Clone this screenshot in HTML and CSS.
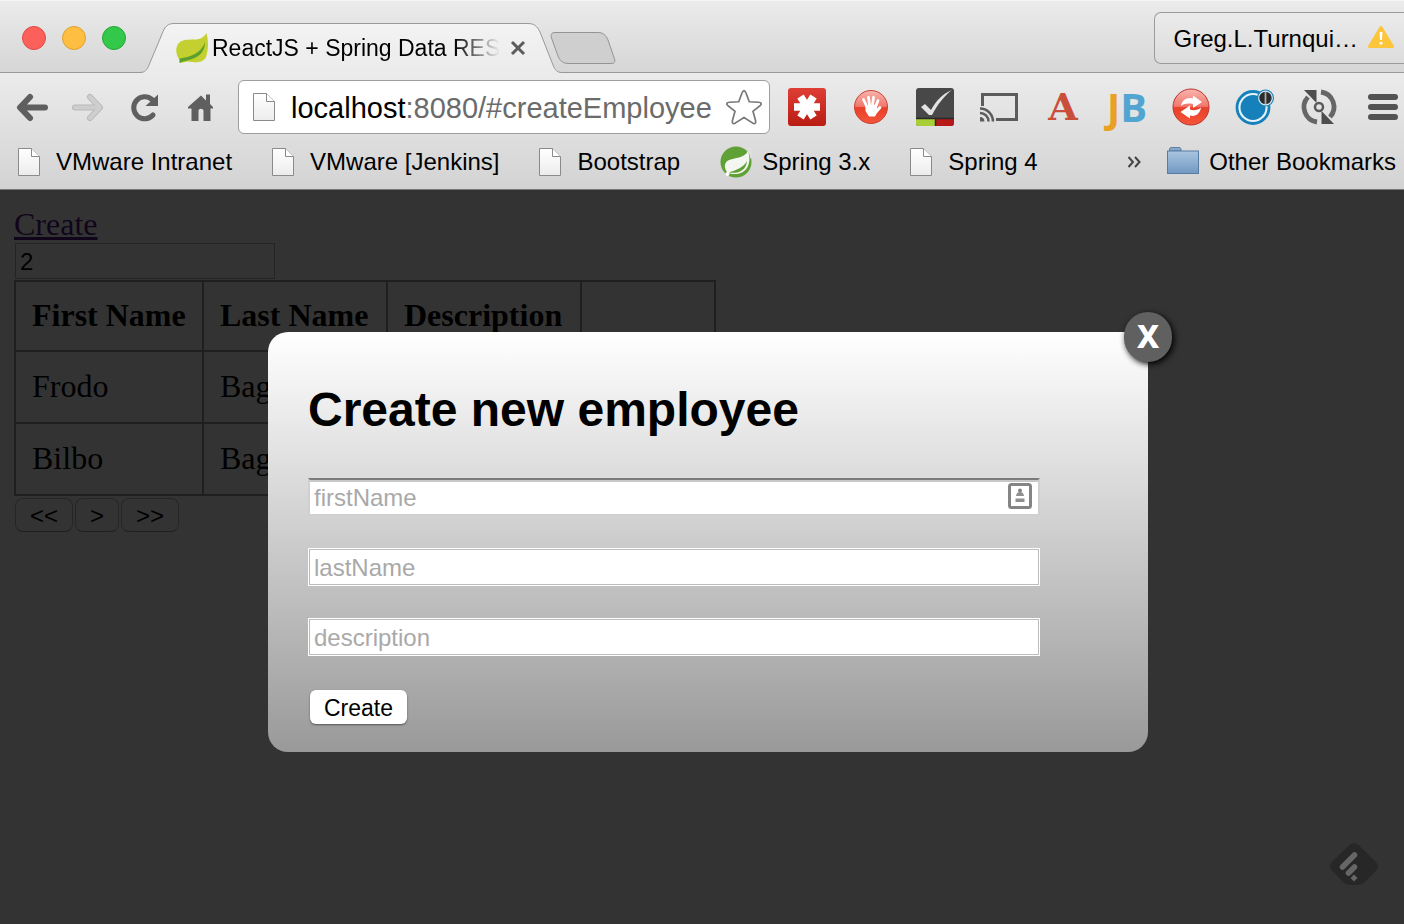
FILE: index.html
```html
<!DOCTYPE html>
<html lang="en">
<head>
<meta charset="utf-8">
<title>ReactJS + Spring Data REST</title>
<link rel="stylesheet" href="styles.css">
</head>
<body>
<svg class="defs" aria-hidden="true">
  <defs>
    <linearGradient id="paper" x1="0" y1="0" x2="0" y2="1"><stop offset="0" stop-color="#fff"/><stop offset="1" stop-color="#ececec"/></linearGradient>
    <linearGradient id="tabfill" x1="0" y1="0" x2="0" y2="1"><stop offset="0" stop-color="#f3f3f3"/><stop offset="1" stop-color="#ebebeb"/></linearGradient>
    <linearGradient id="redbox" x1="0" y1="0" x2="0" y2="1"><stop offset="0" stop-color="#df3e35"/><stop offset="1" stop-color="#b81c12"/></linearGradient>
    <linearGradient id="redball" x1="0" y1="0" x2="0" y2="1"><stop offset="0" stop-color="#f9b5ae"/><stop offset=".48" stop-color="#f0786c"/><stop offset=".52" stop-color="#e8402a"/><stop offset="1" stop-color="#f4553a"/></linearGradient>
    <linearGradient id="folder" x1="0" y1="0" x2="0" y2="1"><stop offset="0" stop-color="#a9c5e0"/><stop offset="1" stop-color="#7199c3"/></linearGradient>
    <symbol id="file" viewBox="0 0 22 28"><path d="M.5.5h13l8 8v19H.5z" fill="url(#paper)" stroke="#8a8a8a"/><path d="M13.500.5v8h8" fill="#fff" stroke="#8a8a8a"/></symbol>
  </defs>
</svg>

<header class="browser">
  <div class="tabstrip">
    <div class="lights">
      <button class="light red" aria-label="Close window"></button>
      <button class="light yellow" aria-label="Minimize window"></button>
      <button class="light green" aria-label="Zoom window"></button>
    </div>
    <div class="tab">
      <svg class="tab-shape" viewBox="0 0 422 52" aria-hidden="true"><path d="M0 50.500C5 50.500 7 48 9 43L22 12C25 4 28 1.500 34 1.500H388C394 1.500 397 4 400 10L413 43C415 48 417 50.500 422 50.500V52H0z" fill="url(#tabfill)"/><path d="M0 50.500C5 50.500 7 48 9 43L22 12C25 4 28 1.500 34 1.500H388C394 1.500 397 4 400 10L413 43C415 48 417 50.500 422 50.500" fill="none" stroke="#999"/></svg>
      <svg class="leaf" viewBox="0 0 32 32" aria-hidden="true"><path d="M30.500 1C33 11 32 20 30 25C27 31 19 31 12 29.500L4 31V28C0 24-1 17 2 12C5 8 10 7.500 18 7.500C25 7.500 28 5 30.500 1z" fill="#c3d02f"/><path d="M29 10C26 20 16 25 3.500 26.500V31C8 28.500 12 28.500 16 27C25 24 29 18 29 10z" fill="#5b9f2e"/></svg>
      <span class="tab-title">ReactJS + Spring Data RES</span>
      <button class="tab-close" aria-label="Close tab"><svg viewBox="0 0 16 16"><path d="M2 2l12 12M14 2L2 14" stroke="#5c5c5c" stroke-width="3"/></svg></button>
    </div>
    <button class="new-tab" aria-label="New tab"><svg viewBox="0 0 66 34"><path d="M5 1.500H48C53 1.500 56 4 58 9L64.500 28C65.500 31 64 32.500 61 32.500H19C13 32.500 10 30 8 25L1.500 7C.5 3.500 1.500 1.500 5 1.500z" fill="#cfcfd0" stroke="#949494"/></svg></button>
    <button class="profile">Greg.L.Turnqui… <svg viewBox="0 0 26 22" aria-hidden="true"><path d="M13 1.500L24.500 20.500H1.500z" fill="#fdc63a" stroke="#fdc63a" stroke-width="3" stroke-linejoin="round"/><path d="M11.500 6h3l-.5 8h-2zM11.600 16h2.800v2.600h-2.800z" fill="#fff"/></svg></button>
  </div>

  <div class="chrome">
    <div class="toolbar">
      <nav class="nav">
        <button class="tool" aria-label="Back"><svg viewBox="0 0 40 40"><path d="M32 20.500H8M17 10L7 20.500L17 31" fill="none" stroke="#5f5f5f" stroke-width="6" stroke-linecap="round" stroke-linejoin="round"/></svg></button>
        <button class="tool" aria-label="Forward"><svg viewBox="0 0 40 40"><path d="M6 20.500H30M21 10L31 20.500L21 31" fill="none" stroke="#b9b9b9" stroke-width="6" stroke-linecap="round" stroke-linejoin="round"/><path d="M6 20.500H30M21 10L31 20.500L21 31" fill="none" stroke="#cecece" stroke-width="4" stroke-linecap="round" stroke-linejoin="round"/></svg></button>
        <button class="tool" aria-label="Reload"><svg viewBox="0 0 40 40"><path d="M28 28A11 11 0 1 1 27 12.500" fill="none" stroke="#5f5f5f" stroke-width="5" stroke-linecap="round"/><path d="M33 7.500V19H20.500z" fill="#5f5f5f"/></svg></button>
        <button class="tool" aria-label="Home"><svg viewBox="0 0 40 40"><path d="M20 8.500L25 13.500V7.500H29V17L32 20V21.500H29.500V34H22.500V24C22.500 21 17.500 21 17.500 24V34H10.500V21.500H7V20z" fill="#5f5f5f"/></svg></button>
      </nav>
      <div class="omnibox">
        <svg class="file" aria-hidden="true"><use href="#file"/></svg>
        <div class="url" role="textbox" aria-label="Address" tabindex="0">localhost<span class="path">:8080/#createEmployee</span></div>
        <button class="star" aria-label="Bookmark this page"><svg viewBox="0 0 36 36"><path d="M18 2.500C19 2.500 19.500 4 20 5L23 13L32 13.500C34.500 13.700 35 15 33.500 16.500L26.500 22L29 31C29.500 33.500 28 34.500 26 33L18 28L10 33C8 34.500 6.500 33.500 7 31L9.500 22L2.500 16.500C1 15 1.500 13.700 4 13.500L13 13L16 5C16.500 4 17 2.500 18 2.500z" fill="#fff" stroke="#777" stroke-width="1.600"/></svg></button>
      </div>
      <div class="extensions">
        <button class="tool" aria-label="Password manager"><svg viewBox="0 0 40 40"><rect x="1" y="1" width="38" height="38" rx="3" fill="url(#redbox)"/><path d="M13.500 9.500L26.500 30.500M26.500 9.500L13.500 30.500M7 20H33" stroke="#fff" stroke-width="7.500"/></svg></button>
        <button class="tool" aria-label="Ad blocker"><svg viewBox="0 0 40 40"><circle cx="20" cy="20" r="16.500" fill="url(#redball)" stroke="#c94236"/><g stroke="#fff" stroke-width="2.800" stroke-linecap="round"><path d="M16 20L12.500 12.500M18.500 18L17.500 10.500M21.500 18L22.500 10.500M24.500 20L27 13.500M25 25L29 20.500"/></g><path d="M14.500 18.500L26 17.500L26.500 23L28 22L24 29.500H18L14.500 24z" fill="#fff"/></svg></button>
        <button class="tool" aria-label="Task checker"><svg viewBox="0 0 40 40"><rect x="1" y="1" width="38" height="38" rx="3" fill="#484848"/><path d="M1 32H20V39H4Q1 39 1 36z" fill="#a8cf35"/><path d="M21 32H39V36Q39 39 36 39H21z" fill="#b71919"/><path d="M1 31.500H39M20.500 31V39" stroke="#292929" stroke-width="1.500"/><path d="M6 20L10 17L16 23C21 14 27 7 37 3C29 9 23 17 17 28H14z" fill="#e3e3e3"/></svg></button>
        <button class="tool" aria-label="Cast"><svg viewBox="0 0 40 40"><path d="M3.500 19V7.500H37.500V32.500H17" fill="none" stroke="#5c5c5c" stroke-width="3"/><path d="M1 21.500A13 13 0 0 1 14 34.500M1 26A8.500 8.500 0 0 1 9.500 34.500" fill="none" stroke="#5c5c5c" stroke-width="2.500"/><path d="M1 30A4.500 4.500 0 0 1 5.500 34.500H1z" fill="#5c5c5c"/></svg></button>
        <button class="tool letter-a" aria-label="Reader">A</button>
        <button class="tool letters-jb" aria-label="JetBrains"><span class="j">J</span><span class="b">B</span></button>
        <button class="tool" aria-label="Sync tabs"><svg viewBox="0 0 40 40"><circle cx="20" cy="20" r="18" fill="url(#redball)" stroke="#b9362b"/><path d="M10 19C11 13 16 10 22 11.500V8.500L31 15L22 21V17C17 16 13 16.500 10 19z" fill="#fff"/><path d="M30 20.500C29 27 24 30 19 28.500V31.500L9.500 25L19 18.500V22.500C23 24 27 23 30 20.500z" fill="#fff"/></svg></button>
        <button class="tool" aria-label="Session status"><svg viewBox="0 0 40 40"><circle cx="18" cy="20.500" r="16" fill="#e6f2f9" stroke="#1580ba" stroke-width="2.800"/><circle cx="18" cy="20.500" r="12.500" fill="#1580ba"/><circle cx="30.500" cy="11" r="8.500" fill="#1580ba"/><circle cx="30.500" cy="11" r="6.800" fill="#2c2c2c" stroke="#d5e8f2" stroke-width="1.200"/><path d="M30.500 5V17" stroke="#aaa" stroke-width="1.800"/></svg></button>
        <button class="tool" aria-label="Refresh all"><svg viewBox="0 0 40 40"><path d="M18 35A15 15 0 0 1 9 10M22 5A15 15 0 0 1 31 30" fill="none" stroke="#666" stroke-width="4.800"/><path d="M5 3H17.500V16z" fill="#4d4d4d"/><path d="M35 37H22.500V24z" fill="#4d4d4d"/><circle cx="20" cy="20" r="4" fill="none" stroke="#5a5a5a" stroke-width="2.500"/></svg></button>
        <button class="tool" aria-label="Menu"><svg viewBox="0 0 40 40"><path d="M8 10H32M8 20H32M8 30H32" stroke="#525252" stroke-width="6" stroke-linecap="round"/></svg></button>
      </div>
    </div>

    <nav class="bookmarks" aria-label="Bookmarks">
      <a href="#vmware"><svg class="file" aria-hidden="true"><use href="#file"/></svg>VMware Intranet</a>
      <a href="#jenkins"><svg class="file" aria-hidden="true"><use href="#file"/></svg>VMware [Jenkins]</a>
      <a href="#bootstrap"><svg class="file" aria-hidden="true"><use href="#file"/></svg>Bootstrap</a>
      <a class="tight" href="#spring3"><svg class="site" viewBox="0 0 32 32" aria-hidden="true"><circle cx="16" cy="16" r="15.500" fill="#5fa134"/><path d="M27 2H32V10L30 13C30 9 29 5 27 2z" fill="#dedede"/><path d="M28 5C30 11 30 17 27 22C23 28 16 29 10 27.500L7 26C4 22 4 17 8 14.500C15 11 24 13 28 5z" fill="#f4f6f2"/><path d="M27 15C23 22 16 24 9 26.500C18 28 26 25 27 15z" fill="#5fa134"/><circle cx="7.500" cy="28" r="2" fill="#fff"/></svg>Spring 3.x</a>
      <a href="#spring4"><svg class="file" aria-hidden="true"><use href="#file"/></svg>Spring 4</a>
      <button class="more" aria-label="More bookmarks"><svg viewBox="0 0 14 12"><path d="M1.500 1L6 6L1.500 11M8 1L12.500 6L8 11" fill="none" stroke="#444" stroke-width="2"/></svg></button>
      <a class="tight other" href="#other"><svg class="site" viewBox="0 0 32 32" aria-hidden="true"><path d="M2.500 5V2.500L4 1.500H12.500L14 2.500V5z" fill="#86a9cb" stroke="#5d80a4"/><rect x=".5" y="5" width="31" height="22.500" fill="url(#folder)" stroke="#587da3"/></svg>Other Bookmarks</a>
    </nav>
  </div>
</header>

<main class="page">
  <a class="create-link" href="#createEmployee">Create</a>
  <input class="page-size" type="text" value="2" aria-label="Page size">
  <table class="employees">
    <colgroup><col class="c-first"><col class="c-last"><col class="c-desc"><col class="c-action"></colgroup>
    <thead><tr><th>First Name</th><th>Last Name</th><th>Description</th><th></th></tr></thead>
    <tbody>
      <tr><td>Frodo</td><td>Baggins</td><td></td><td></td></tr>
      <tr><td>Bilbo</td><td>Baggins</td><td></td><td></td></tr>
    </tbody>
  </table>
  <div class="pager"><button>&lt;&lt;</button><button>&gt;</button><button>&gt;&gt;</button></div>

  <div class="overlay">
    <section class="dialog" role="dialog" aria-labelledby="dialog-title">
      <a class="dialog-close" href="#close" aria-label="Close">X</a>
      <h2 id="dialog-title">Create new employee</h2>
      <form>
        <div class="field">
          <input class="sunken" type="text" placeholder="firstName" aria-label="firstName">
          <svg class="autofill" viewBox="0 0 24 26" aria-hidden="true"><rect x="1.500" y="1.500" width="21" height="23" rx="2" fill="#fff" stroke="#858585" stroke-width="3"/><circle cx="12" cy="7.500" r="2" fill="#858585"/><path d="M8 13Q8.500 9 12 9T16 13zM7.500 15.500h9v3.500h-9z" fill="#8f8f8f"/></svg>
        </div>
        <div class="field"><input type="text" placeholder="lastName" aria-label="lastName"></div>
        <div class="field"><input type="text" placeholder="description" aria-label="description"></div>
        <button class="submit" type="button">Create</button>
      </form>
    </section>
  </div>
  <button class="reader" aria-label="Subscribe"><svg viewBox="0 0 48 42"><path d="M19.500 2Q24 -2 28.500 2L46 19Q50 23.500 46 27.500L35 39Q32 42 28 42H20Q16 42 13 39L2 27.500Q-2 23.500 2 19z" fill="#272727"/><path d="M12.500 24L24.500 12M18.500 30L24.500 24" stroke="#666" stroke-width="5.500" stroke-linecap="round"/><path d="M24 31.500L27.500 35L24 38.500L20.500 35z" fill="#666"/></svg></button>
</main>
</body>
</html>
```
FILE: styles.css
```css
* { box-sizing: border-box; }

body {
  display: flex;
  flex-direction: column;
  min-height: 100vh;
  margin: 0;
  font-family: "Liberation Sans", Arial, sans-serif;
  font-size: 24px;
  color: #000;
}

button {
  margin: 0;
  padding: 0;
  border: 0;
  background: none;
  font: inherit;
  color: inherit;
}

svg { display: block; flex: none; }
.defs { position: absolute; width: 0; height: 0; }

/* Tab strip */
.tabstrip {
  display: flex;
  align-items: flex-start;
  height: 73px;
  border-top: 1px solid #f5f5f5;
  border-bottom: 1px solid #999;
  background: linear-gradient(#ebebeb, #d6d6d6);
}
.lights { display: flex; gap: 16px; padding: 25px 14px 0 22px; }
.light { width: 24px; height: 24px; border: 1px solid; border-radius: 50%; }
.red { background: #fc605b; border-color: #e14942; }
.yellow { background: #fdbe41; border-color: #e0a02f; }
.green { background: #34c84a; border-color: #24a732; }

.tab {
  position: relative;
  display: flex;
  align-items: center;
  flex: none;
  width: 422px;
  height: 52px;
  margin-top: 21px;
  padding-left: 36px;
}
.tab > * { position: relative; }
.tab .tab-shape { position: absolute; inset: 0; width: 422px; height: 52px; }
.leaf { width: 32px; height: 32px; }
.tab-title {
  width: 288px;
  margin-left: 4px;
  font-size: 23px;
  line-height: 28px;
  white-space: nowrap;
  mask-image: linear-gradient(90deg, #000 84%, transparent);
}
.tab-close svg { width: 16px; height: 16px; margin-left: 10px; }
.new-tab { margin: 30px 0 0 -12px; }
.new-tab svg { width: 66px; height: 34px; }
.profile {
  display: flex;
  align-items: center;
  gap: 10px;
  height: 52px;
  margin: 11px 0 0 auto;
  padding: 2px 10px 0 18px;
  border: 1px solid #9b9b9b;
  border-right: 0;
  border-radius: 7px 0 0 7px;
  background: linear-gradient(#ebebeb, #dcdcdc);
}
.profile svg { width: 26px; height: 22px; margin-bottom: 4px; }

/* Toolbar and bookmarks */
.chrome {
  border-bottom: 1px solid #777;
  background: linear-gradient(#ebebeb, #d3d3d3);
}
.toolbar { display: flex; align-items: center; gap: 17px; padding: 7px 1px 0 13px; }
.nav { display: flex; gap: 16px; }
.tool { display: flex; align-items: center; justify-content: center; width: 40px; height: 40px; }
.tool svg { width: 40px; height: 40px; }
.omnibox {
  display: flex;
  align-items: center;
  flex: 1;
  min-width: 0;
  height: 54px;
  padding: 0 6px 0 14px;
  border: 1px solid #9d9d9d;
  border-radius: 6px;
  background: #fff;
}
.file { width: 22px; height: 28px; }
.omnibox .file { height: 30px; }
.url { flex: 1; margin-left: 16px; padding-top: 2px; font-size: 29px; line-height: 36px; white-space: nowrap; }
.path { color: #6b6b6b; }
.star svg { width: 38px; height: 38px; }
.extensions { display: flex; gap: 24px; }
.letter-a { color: #c94f3b; font: bold 38px/40px "DejaVu Serif", serif; }
.letters-jb { font: bold 40px/40px "Open Sans", sans-serif; }
.j { color: #e9a023; }
.b { color: #52a5d0; }

.bookmarks { display: flex; align-items: center; gap: 40px; padding: 6px 8px 6px 18px; height: 55px; white-space: nowrap; }
.bookmarks a { display: flex; align-items: center; gap: 16px; color: inherit; text-decoration: none; }
.bookmarks a.tight { gap: 10px; }
.site { width: 32px; height: 32px; }
.more { margin-left: auto; }
.more svg { width: 14px; height: 12px; }
.bookmarks .other { margin-left: -14px; }

/* Web page */
.page {
  position: relative;
  flex: 1;
  padding: 16px 14px;
  background: #fff;
  font-family: "Liberation Serif", "Times New Roman", serif;
  font-size: 32px;
  line-height: 36px;
}
.create-link { display: table; color: #551a8b; }
.page-size {
  display: block;
  width: 260px;
  height: 36px;
  margin: 1px;
  padding: 2px 4px 0;
  border: 1px solid #b4b4b4;
  font: 24px "Liberation Sans", Arial, sans-serif;
}
.employees { border-collapse: collapse; table-layout: fixed; width: 702px; }
.employees th, .employees td { padding: 15px 16px 17px; border: 2px solid #999; text-align: left; }
.employees td { line-height: 38px; }
.c-first { width: 188px; }
.c-last { width: 184px; }
.c-desc { width: 194px; }
.c-action { width: 134px; }
.pager { display: flex; gap: 2px; padding: 2px 1px; }
.pager button {
  padding: 2px 14px 0;
  border: 1px solid #bbb;
  border-bottom-color: #999;
  border-radius: 8px;
  font: 24px/30px "Liberation Sans", Arial, sans-serif;
}

.overlay {
  position: absolute;
  inset: 0;
  display: flex;
  justify-content: center;
  align-items: flex-start;
  padding: 142px 0 0 12px;
  background: rgba(0, 0, 0, .8);
  font-family: "Liberation Sans", Arial, sans-serif;
  font-size: 24px;
}
.dialog {
  position: relative;
  width: 880px;
  max-width: 90%;
  padding: 50px 40px 26px;
  border-radius: 20px;
  background: linear-gradient(#fff, #999);
}
.dialog h2 { margin: 0 0 40px; font-size: 48px; line-height: 56px; }
.dialog form { display: flex; flex-direction: column; gap: 32px; margin-right: 68px; }
.field { position: relative; display: flex; }
.field input {
  width: 100%;
  height: 38px;
  margin: 0;
  padding: 2px 5px 0;
  border: 1px solid #fff;
  box-shadow: inset 0 0 0 1px #bcbcbc;
  background: #fff;
  font: 24px "Liberation Sans", Arial, sans-serif;
}
.field input::placeholder { color: #a9a9a9; opacity: 1; }
.field .sunken {
  padding: 2px 4px 0;
  border: 2px solid #d0d0d0;
  border-top-color: #7b7b7b;
  box-shadow: inset 0 2px 0 #c8c8c8;
}
.autofill { position: absolute; right: 8px; top: 5px; width: 24px; height: 26px; }
.submit {
  align-self: flex-start;
  margin: 2px;
  padding: 2px 14px 0;
  border-radius: 6px;
  background: #fff;
  box-shadow: 0 1px 2px #555;
  line-height: 32px;
  font-size: 23px;
}
.dialog-close {
  position: absolute;
  right: -24px;
  top: -20px;
  width: 48px;
  height: 50px;
  border-radius: 24px;
  background: #606061;
  box-shadow: 2px 2px 6px #000;
  color: #fff;
  font: 800 32px/48px "Noto Sans", "Open Sans", sans-serif;
  text-align: center;
  text-decoration: none;
}
.reader { position: absolute; right: 26px; bottom: 39px; }
.reader svg { width: 48px; height: 42px; }
```
